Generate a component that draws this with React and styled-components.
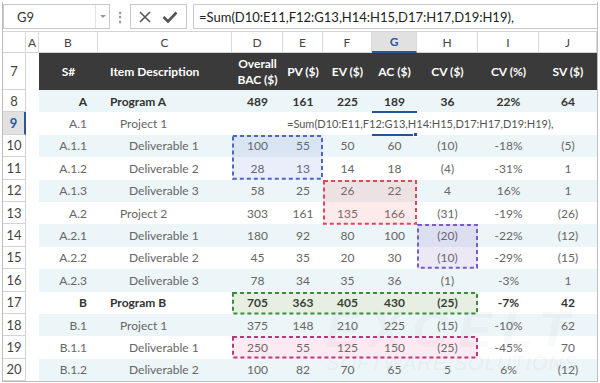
import React from 'react';
import styled, { createGlobalStyle } from 'styled-components';

// column widths: row header, A, B .. J
const COLS = [23, 13, 59, 134, 51, 40, 49, 45, 61, 61, 58];
const ROW_H = 22.4;
const TEMPLATE = COLS.map((c) => c + 'px').join(' ');
const LETTERS = ['A', 'B', 'C', 'D', 'E', 'F', 'G', 'H', 'I', 'J'];

const colLeft = (i) => COLS.slice(0, i).reduce((a, b) => a + b, 0);
const rowTop = (r) => (r - 8) * ROW_H;

const ROWS = [
  { n: 8, id: 'A', name: 'Program A', level: 0, bold: true, v: ['489', '161', '225', '189', '36', '22%', '64'] },
  { n: 9, id: 'A.1', name: 'Project 1', level: 1, formula: true },
  { n: 10, id: 'A.1.1', name: 'Deliverable 1', level: 2, v: ['100', '55', '50', '60', '(10)', '-18%', '(5)'] },
  { n: 11, id: 'A.1.2', name: 'Deliverable 2', level: 2, v: ['28', '13', '14', '18', '(4)', '-31%', '1'] },
  { n: 12, id: 'A.1.3', name: 'Deliverable 3', level: 2, v: ['58', '25', '26', '22', '4', '16%', '1'] },
  { n: 13, id: 'A.2', name: 'Project 2', level: 1, v: ['303', '161', '135', '166', '(31)', '-19%', '(26)'] },
  { n: 14, id: 'A.2.1', name: 'Deliverable 1', level: 2, v: ['180', '92', '80', '100', '(20)', '-22%', '(12)'] },
  { n: 15, id: 'A.2.2', name: 'Deliverable 2', level: 2, v: ['45', '35', '20', '30', '(10)', '-29%', '(15)'] },
  { n: 16, id: 'A.2.3', name: 'Deliverable 3', level: 2, v: ['78', '34', '35', '36', '(1)', '-3%', '1'] },
  { n: 17, id: 'B', name: 'Program B', level: 0, bold: true, v: ['705', '363', '405', '430', '(25)', '-7%', '42'] },
  { n: 18, id: 'B.1', name: 'Project 1', level: 1, v: ['375', '148', '210', '225', '(15)', '-10%', '62'] },
  { n: 19, id: 'B.1.1', name: 'Deliverable 1', level: 2, v: ['250', '55', '125', '150', '(25)', '-45%', '70'] },
  { n: 20, id: 'B.1.2', name: 'Deliverable 2', level: 2, v: ['100', '82', '70', '65', '5', '6%', '(12)'] },
];

const RANGES = [
  { c1: 4, c2: 5, r1: 10, r2: 11, line: '#4e66c6', fill: 'rgba(90,120,215,0.13)' },
  { c1: 6, c2: 7, r1: 12, r2: 13, line: '#e2465c', fill: 'rgba(240,110,110,0.14)' },
  { c1: 8, c2: 8, r1: 14, r2: 15, line: '#7a5cc2', fill: 'rgba(125,95,190,0.14)' },
  { c1: 4, c2: 8, r1: 17, r2: 17, line: '#3d8c3d', fill: 'rgba(95,150,70,0.15)' },
  { c1: 4, c2: 8, r1: 19, r2: 19, line: '#b83a7c', fill: 'rgba(225,90,150,0.13)' },
];

const FORMULA = '=Sum(D10:E11,F12:G13,H14:H15,D17:H17,D19:H19),';

const GlobalStyle = createGlobalStyle`
  html, body { margin: 0; padding: 0; background: #fff; }
  body { font-family: "Lato", "Liberation Sans", sans-serif; }
  * { box-sizing: border-box; }
`;

const Frame = styled.div`
  margin: 2px 0 0 2px;
  width: 596px;
  height: 380px;
  border: 1px solid #bdbdbd;
  border-top: none;
  overflow: hidden;
  position: relative;
  background: #fff;
`;

const FormulaBar = styled.div`
  height: 30px;
  display: flex;
  align-items: center;
  border-bottom: 1px solid #d4d4d4;
`;

const NameBox = styled.div`
  width: 107px;
  height: 25px;
  border: 1px solid #c8c8c8;
  display: flex;
  align-items: stretch;
  background: #fff;
`;

const NameText = styled.div`
  flex: 1;
  padding-left: 13px;
  font-size: 13px;
  color: #333;
  display: flex;
  align-items: center;
`;

const DropArrow = styled.div`
  width: 14px;
  border-left: 1px solid #e2e2e2;
  display: flex;
  align-items: center;
  justify-content: center;
  &::after {
    content: '';
    border-left: 3px solid transparent;
    border-right: 3px solid transparent;
    border-top: 3px solid #9a9a9a;
  }
`;

const Dots = styled.div`
  width: 20px;
  text-align: center;
  color: #8a8a8a;
  font-size: 12px;
  font-weight: bold;
`;

const EditBox = styled.div`
  width: 57px;
  height: 25px;
  border: 1px solid #c8c8c8;
  display: flex;
  align-items: center;
  justify-content: space-around;
  padding: 0 3px;
`;

const FormulaInput = styled.div`
  flex: 1;
  margin-left: 6px;
  height: 25px;
  border: 1px solid #c8c8c8;
  border-right: none;
  padding-left: 5px;
  display: flex;
  align-items: center;
  font-size: 13px;
  color: #222;
  white-space: nowrap;
`;

const Row = styled.div`
  display: grid;
  grid-template-columns: ${TEMPLATE};
  height: ${(p) => p.$h}px;
`;

const ColHead = styled.div`
  border-right: 1px solid #d9d9d9;
  border-bottom: ${(p) => (p.$active ? '2px solid #2b579a' : '1px solid #d4d4d4')};
  background: ${(p) => (p.$active ? '#e1e1e1' : '#fff')};
  color: ${(p) => (p.$active ? '#2b579a' : '#444')};
  font-weight: ${(p) => (p.$active ? 'bold' : 'normal')};
  font-size: 12px;
  display: flex;
  align-items: center;
  justify-content: center;
`;

const RowHead = styled.div`
  border-bottom: 1px solid #d4d4d4;
  border-right: ${(p) => (p.$active ? '2px solid #2b579a' : '1px solid #d4d4d4')};
  background: ${(p) => (p.$active ? '#e1e1e1' : '#fff')};
  color: ${(p) => (p.$active ? '#2b579a' : '#444')};
  font-weight: ${(p) => (p.$active ? 'bold' : 'normal')};
  font-size: 13px;
  display: flex;
  align-items: center;
  justify-content: center;
`;

const Blank = styled.div`
  background: #fff;
`;

const HeadCell = styled.div`
  background: #3a3a3a;
  color: #fff;
  font-weight: bold;
  font-size: 12px;
  line-height: 16px;
  display: flex;
  align-items: center;
  justify-content: ${(p) => (p.$left ? 'flex-start' : 'center')};
  padding-left: ${(p) => (p.$left ? '12px' : '0')};
  text-align: center;
`;

const Cell = styled.div`
  background: ${(p) => (p.$band ? '#ecf5f7' : '#fff')};
  color: ${(p) => (p.$bold ? '#333' : '#666')};
  font-weight: ${(p) => (p.$bold ? 'bold' : 'normal')};
  font-size: 12px;
  display: flex;
  align-items: center;
  justify-content: ${(p) => p.$align || 'center'};
  padding-left: ${(p) => p.$pl || 0}px;
  padding-right: ${(p) => p.$pr || 0}px;
  white-space: nowrap;
`;

const Overflow = styled(Cell)`
  grid-column: 6 / -1;
  justify-content: flex-start;
  padding-left: 4px;
  font-size: 11px;
  color: #555;
  overflow: visible;
`;

const Body = styled.div`
  position: relative;
`;

const RangeBox = styled.div`
  position: absolute;
  background: ${(p) => p.$fill};
  pointer-events: none;
  svg { position: absolute; inset: 0; overflow: visible; }
`;

const ActiveLine = styled.div`
  position: absolute;
  height: 2px;
  background: #21579a;
`;

const Handle = styled.div`
  position: absolute;
  width: 5px;
  height: 5px;
  background: #21579a;
  border: 1px solid #fff;
`;

const Watermark = styled.div`
  position: absolute;
  right: 18px;
  bottom: 6px;
  display: flex;
  flex-direction: column;
  align-items: center;
  font-style: italic;
  pointer-events: none;
`;

const WmBig = styled.div`
  font-family: "Liberation Sans", sans-serif;
  font-weight: 900;
  font-size: 50px;
  letter-spacing: 10px;
  color: rgba(120, 140, 150, 0.05);
  line-height: 44px;
`;

const WmSmall = styled.div`
  font-family: "Liberation Sans", sans-serif;
  font-size: 20px;
  letter-spacing: 1px;
  color: rgba(120, 140, 150, 0.07);
`;

const Range = ({ c1, c2, r1, r2, line, fill }) => {
  const left = colLeft(c1);
  const width = colLeft(c2 + 1) - left;
  const top = rowTop(r1);
  const height = rowTop(r2 + 1) - top;
  return (
    <RangeBox $fill={fill} style={{ left, top, width, height }}>
      <svg width={width} height={height}>
        <rect x="1" y="1" width={width - 2} height={height - 2} fill="none"
          stroke={line} strokeWidth="2" strokeDasharray="4 3" />
      </svg>
    </RangeBox>
  );
};

const labelPad = [12, 22, 31];

const App = () => {
  const gLeft = colLeft(7);
  const gWidth = COLS[7];
  return (
    <>
      <GlobalStyle />
      <Frame>
        <FormulaBar>
          <NameBox>
            <NameText>G9</NameText>
            <DropArrow />
          </NameBox>
          <Dots>⋮</Dots>
          <EditBox>
            <svg width="12" height="12" viewBox="0 0 12 12">
              <path d="M1 1 L11 11 M11 1 L1 11" stroke="#555" strokeWidth="1.6" fill="none" />
            </svg>
            <svg width="16" height="12" viewBox="0 0 16 12">
              <path d="M1.5 6 L6 10.5 L14.5 1.5" stroke="#555" strokeWidth="2.6" fill="none" />
            </svg>
          </EditBox>
          <FormulaInput>{FORMULA}</FormulaInput>
        </FormulaBar>

        <Row $h={21}>
          <ColHead />
          {LETTERS.map((l) => (
            <ColHead key={l} $active={l === 'G'}>{l}</ColHead>
          ))}
        </Row>

        <Row $h={37}>
          <RowHead>7</RowHead>
          <Blank />
          <HeadCell>S#</HeadCell>
          <HeadCell $left>Item Description</HeadCell>
          <HeadCell>Overall<br />BAC ($)</HeadCell>
          <HeadCell>PV ($)</HeadCell>
          <HeadCell>EV ($)</HeadCell>
          <HeadCell>AC ($)</HeadCell>
          <HeadCell>CV ($)</HeadCell>
          <HeadCell>CV (%)</HeadCell>
          <HeadCell>SV ($)</HeadCell>
        </Row>

        <Body>
          {ROWS.map((r) => {
            const band = r.n % 2 === 0;
            return (
              <Row key={r.n} $h={ROW_H}>
                <RowHead $active={r.n === 9}>{r.n}</RowHead>
                <Blank />
                <Cell $band={band} $bold={r.bold} $align="flex-end" $pr={11}>{r.id}</Cell>
                <Cell $band={band} $bold={r.bold} $align="flex-start" $pl={labelPad[r.level]}>{r.name}</Cell>
                {r.formula ? (
                  <>
                    <Cell $band={band} />
                    <Overflow $band={band}>{FORMULA}</Overflow>
                  </>
                ) : (
                  r.v.map((val, i) => (
                    <Cell key={i} $band={band} $bold={r.bold}>{val}</Cell>
                  ))
                )}
              </Row>
            );
          })}

          {RANGES.map((g, i) => (
            <Range key={i} {...g} />
          ))}

          <ActiveLine style={{ left: gLeft, width: gWidth, top: rowTop(9) - 1 }} />
          <ActiveLine style={{ left: gLeft, width: gWidth - 2, top: rowTop(10) - 1 }} />
          <Handle style={{ left: gLeft + gWidth - 4, top: rowTop(10) - 3 }} />

          <Watermark>
            <WmBig>EXCELT</WmBig>
            <WmSmall>SOFTWARE SOLUTIONS</WmSmall>
          </Watermark>
        </Body>
      </Frame>
    </>
  );
};

export default App;
